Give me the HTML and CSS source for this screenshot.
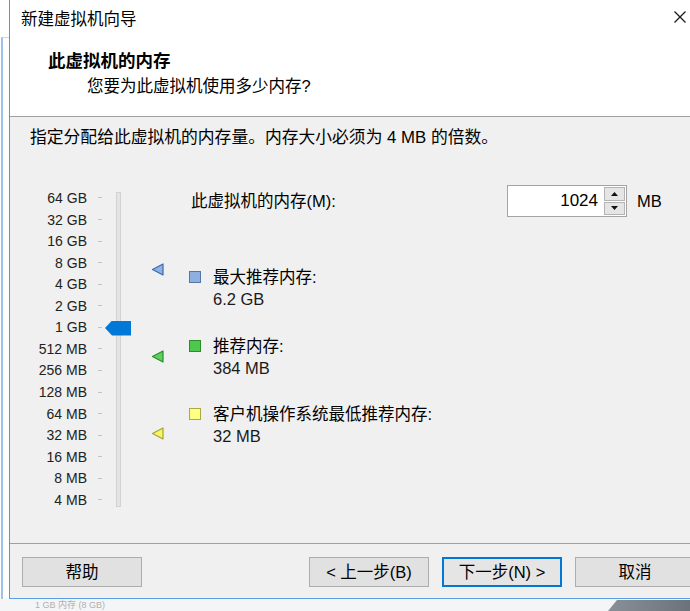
FILE: index.html
```html
<!DOCTYPE html>
<html lang="zh-CN">
<head>
<meta charset="utf-8">
<title>新建虚拟机向导</title>
<link rel="stylesheet" href="styles.css">
</head>
<body>
<div class="screen">
  <div class="edge"><div class="edge-frame"></div></div>
  <div class="window">
    <div class="titlebar">
      <span class="title">新建虚拟机向导</span>
      <span class="close"><svg width="14" height="14" viewBox="0 0 14 14"><path d="M1.5 1.5 L12.5 12.5 M12.5 1.5 L1.5 12.5" stroke="#1a1a1a" stroke-width="1.3" fill="none"/></svg></span>
    </div>
    <div class="header">
      <div class="h-title">此虚拟机的内存</div>
      <div class="h-sub">您要为此虚拟机使用多少内存?</div>
    </div>
    <div class="content">
      <div class="hint">指定分配给此虚拟机的内存量。内存大小必须为 4 MB 的倍数。</div>
      <div class="main">
        <div class="scale">
          <div class="tick-row"><span class="tick-label">64 GB</span><span class="tick"></span></div>
          <div class="tick-row"><span class="tick-label">32 GB</span><span class="tick"></span></div>
          <div class="tick-row"><span class="tick-label">16 GB</span><span class="tick"></span></div>
          <div class="tick-row"><span class="tick-label">8 GB</span><span class="tick"></span></div>
          <div class="tick-row"><span class="tick-label">4 GB</span><span class="tick"></span></div>
          <div class="tick-row"><span class="tick-label">2 GB</span><span class="tick"></span></div>
          <div class="tick-row"><span class="tick-label">1 GB</span><span class="tick"></span></div>
          <div class="tick-row"><span class="tick-label">512 MB</span><span class="tick"></span></div>
          <div class="tick-row"><span class="tick-label">256 MB</span><span class="tick"></span></div>
          <div class="tick-row"><span class="tick-label">128 MB</span><span class="tick"></span></div>
          <div class="tick-row"><span class="tick-label">64 MB</span><span class="tick"></span></div>
          <div class="tick-row"><span class="tick-label">32 MB</span><span class="tick"></span></div>
          <div class="tick-row"><span class="tick-label">16 MB</span><span class="tick"></span></div>
          <div class="tick-row"><span class="tick-label">8 MB</span><span class="tick"></span></div>
          <div class="tick-row"><span class="tick-label">4 MB</span><span class="tick"></span></div>
        </div>
        <div class="track"><div class="thumb"></div></div>
        <div class="markers">
          <svg class="marker marker-max" width="13" height="13" viewBox="0 0 13 13"><polygon points="12,1 12,12 1.5,6.5" fill="#8db2e6" stroke="#3e69ad" stroke-width="1.2" stroke-linejoin="round"/></svg>
          <svg class="marker marker-rec" width="13" height="13" viewBox="0 0 13 13"><polygon points="12,1 12,12 1.5,6.5" fill="#5fcf5f" stroke="#26902a" stroke-width="1.2" stroke-linejoin="round"/></svg>
          <svg class="marker marker-min" width="13" height="13" viewBox="0 0 13 13"><polygon points="12,1 12,12 1.5,6.5" fill="#f5f56a" stroke="#a4a42a" stroke-width="1.2" stroke-linejoin="round"/></svg>
        </div>
        <div class="panel">
          <div class="mem-row">
            <span class="mem-label">此虚拟机的内存(M):</span>
            <div class="spin">
              <div class="spin-value">1024</div>
              <div class="spin-btns">
                <div class="spin-btn"><svg width="7" height="4" viewBox="0 0 7 4"><polygon points="0,4 7,4 3.5,0" fill="#111"/></svg></div>
                <div class="spin-btn"><svg width="7" height="4" viewBox="0 0 7 4"><polygon points="0,0 7,0 3.5,4" fill="#111"/></svg></div>
              </div>
            </div>
            <span class="unit">MB</span>
          </div>
          <div class="legend">
            <div class="legend-item">
              <span class="swatch swatch-max"></span>
              <div class="legend-text"><div>最大推荐内存:</div><div class="legend-val">6.2 GB</div></div>
            </div>
            <div class="legend-item">
              <span class="swatch swatch-rec"></span>
              <div class="legend-text"><div>推荐内存:</div><div class="legend-val">384 MB</div></div>
            </div>
            <div class="legend-item">
              <span class="swatch swatch-min"></span>
              <div class="legend-text"><div>客户机操作系统最低推荐内存:</div><div class="legend-val">32 MB</div></div>
            </div>
          </div>
        </div>
      </div>
    </div>
    <div class="buttons">
      <button class="btn">帮助</button>
      <div class="spacer"></div>
      <button class="btn">&lt; 上一步(B)</button>
      <button class="btn btn-default">下一步(N) &gt;</button>
      <button class="btn">取消</button>
    </div>
  </div>
</div>
<div class="desk"><span class="desk-text">1 GB 内存 (8 GB)</span></div>
<div class="corner"></div>
</body>
</html>
```
FILE: styles.css
```css
* { box-sizing: border-box; }
html, body { margin: 0; padding: 0; }
body {
  width: 690px;
  height: 611px;
  overflow: hidden;
  position: relative;
  background: #f4f5f7;
  font-family: "Liberation Sans", "Noto Sans CJK SC", sans-serif;
  color: #000;
}
.screen {
  display: flex;
  height: 599px;
  width: 720px;
  background: #fff;
}
.edge {
  width: 9px;
  flex: none;
  background: #fff;
}
.edge-frame {
  margin-top: 37px;
  margin-left: 1px;
  height: 562px;
  border-top: 1px solid #c9d6e6;
  border-left: 2px solid #9cc2ea;
}
.window {
  width: 696px;
  flex: none;
  border-left: 1px solid #4f97e0;
  border-bottom: 1px solid #5a9fe3;
  display: flex;
  flex-direction: column;
}
.titlebar {
  height: 36px;
  display: flex;
  align-items: center;
  justify-content: space-between;
  background: #fff;
  padding-left: 11px;
}
.title {
  font-size: 16.5px;
  line-height: 20px;
  font-family: "Noto Sans CJK SC", sans-serif;
}
.close {
  width: 50px;
  height: 36px;
  display: flex;
  align-items: center;
  justify-content: center;
  padding-bottom: 2px;
}
.header {
  height: 81px;
  background: #fff;
  border-bottom: 1px solid #a0a0a0;
  padding-top: 12px;
}
.h-title {
  padding-left: 38px;
  font-size: 17.5px;
  font-weight: bold;
  line-height: 24px;
  font-family: "Noto Sans CJK SC", sans-serif;
}
.h-sub {
  padding-left: 77px;
  margin-top: 2px;
  font-size: 16.5px;
  line-height: 24px;
}
.content {
  height: 427px;
  background: #f0f0f0;
  border-bottom: 1px solid #a0a0a0;
  padding-top: 10px;
}
.hint {
  padding-left: 20px;
  font-size: 16.8px;
  line-height: 22px;
}
.main {
  margin-top: 36px;
  display: flex;
  align-items: flex-start;
}
.scale {
  padding-top: 2.2px;
  display: flex;
  flex-direction: column;
}
.tick-row {
  height: 21.57px;
  display: flex;
  align-items: center;
}
.tick-label {
  width: 77px;
  text-align: right;
  font-size: 14px;
  line-height: 16px;
  color: #222;
}
.tick {
  margin-left: 11px;
  width: 4px;
  height: 1px;
  background: #c2c2c2;
}
.track {
  position: relative;
  margin-left: 14px;
  margin-top: 7px;
  width: 5px;
  height: 315px;
  background: #e4e4e4;
  border: 1px solid #d2d2d2;
}
.thumb {
  position: absolute;
  left: -12px;
  top: 127.5px;
  width: 26px;
  height: 15px;
  background: #0078d7;
  clip-path: polygon(0 50%, 7px 0, 100% 0, 100% 100%, 7px 100%);
}
.markers {
  position: relative;
  margin-left: 30px;
  width: 13px;
  height: 320px;
}
.marker {
  position: absolute;
  left: 0;
  display: block;
}
.marker-max { top: 78px; }
.marker-rec { top: 165px; }
.marker-min { top: 242px; }
.panel {
  margin-left: 25px;
}
.mem-row {
  height: 32px;
  display: flex;
  align-items: center;
}
.mem-label {
  width: 318px;
  padding-left: 2px;
  font-size: 16.5px;
  line-height: 22px;
}
.spin {
  width: 120px;
  height: 32px;
  border: 1px solid #a3a3a3;
  background: #fff;
  display: flex;
}
.spin-value {
  width: 96px;
  text-align: right;
  padding-right: 6px;
  font-size: 17px;
  line-height: 30px;
}
.spin-btns {
  flex: 1;
  display: flex;
  flex-direction: column;
  gap: 1px;
  padding: 1px 1px 1px 0;
}
.spin-btn {
  flex: 1;
  background: #e5e5e5;
  border: 1px solid #b4b4b4;
  display: flex;
  align-items: center;
  justify-content: center;
}
.spin-btn svg { display: block; }
.unit {
  margin-left: 10px;
  font-size: 16.5px;
  line-height: 22px;
}
.legend {
  margin-top: 49px;
  display: flex;
  flex-direction: column;
  gap: 24.5px;
}
.legend-item {
  display: flex;
  align-items: flex-start;
}
.swatch {
  width: 12px;
  height: 12px;
  margin-top: 5px;
  flex: none;
  border: 1px solid;
}
.swatch-max { background: #8fb0df; border-color: #5576a9; }
.swatch-rec { background: #4cc84c; border-color: #2a8d2a; }
.swatch-min { background: #ffff86; border-color: #a9a944; }
.legend-text {
  margin-left: 12px;
  font-size: 16.5px;
  line-height: 22px;
}
.legend-val { color: #1a1a1a; }
.buttons {
  flex: 1;
  display: flex;
  align-items: flex-start;
  gap: 13px;
  padding: 13px 10px 0 12px;
  background: #f0f0f0;
}
.spacer { flex: 1; }
.btn {
  width: 120px;
  height: 30px;
  background: #e1e1e1;
  border: 1px solid #adadad;
  font-family: "Liberation Sans", "Noto Sans CJK SC", sans-serif;
  font-size: 16.5px;
  line-height: 20px;
  color: #000;
  padding: 0;
}
.btn-default {
  border: 2px solid #0078d7;
  background: #e5e5e5;
}
.desk {
  height: 12px;
  overflow: hidden;
  padding-left: 35px;
}
.desk-text {
  display: block;
  margin-top: 1px;
  font-size: 9px;
  line-height: 10px;
  color: #b0b0b0;
}
.corner {
  position: absolute;
  right: 0;
  bottom: 0;
  width: 82px;
  height: 11px;
  background: linear-gradient(90deg, #8a9097, #6c7279);
  clip-path: polygon(9px 0, 100% 0, 100% 100%, 0 100%);
}
```
